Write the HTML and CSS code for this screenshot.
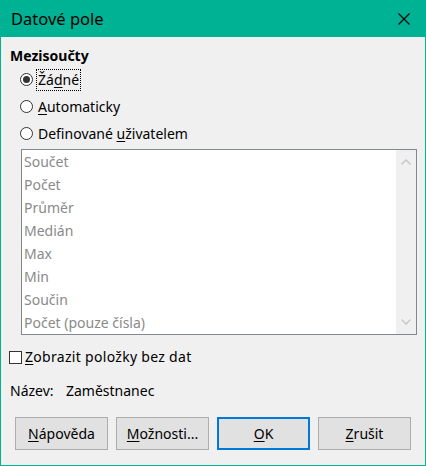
FILE: index.html
```html
<!DOCTYPE html>
<html lang="cs">
<head>
<meta charset="utf-8">
<title>Datové pole</title>
<link rel="stylesheet" href="styles.css">
</head>
<body>
<div class="window">
  <div class="titlebar">
    <span class="title">Datové pole</span>
    <svg class="close" width="12" height="12" viewBox="0 0 12 12" aria-hidden="true">
      <path d="M0.5 0.5 L11.5 11.5 M11.5 0.5 L0.5 11.5" stroke="#000" stroke-width="1.1" fill="none"/>
    </svg>
  </div>
  <div class="content">
    <div class="heading">Mezisoučty</div>
    <div class="radio-row">
      <span class="radio checked"></span>
      <span class="label focus">Žá<u>d</u>né</span>
    </div>
    <div class="radio-row">
      <span class="radio"></span>
      <span class="label"><u>A</u>utomaticky</span>
    </div>
    <div class="radio-row">
      <span class="radio"></span>
      <span class="label">Definované <u>u</u>živatelem</span>
    </div>
    <div class="listbox">
      <ul class="items">
        <li>Součet</li>
        <li>Počet</li>
        <li>Průměr</li>
        <li>Medián</li>
        <li>Max</li>
        <li>Min</li>
        <li>Součin</li>
        <li>Počet (pouze čísla)</li>
      </ul>
      <div class="scrollbar">
        <svg width="10" height="6" viewBox="0 0 10 6" aria-hidden="true"><path d="M0.5 5.5 L5 1 L9.5 5.5" stroke="#c4c4c4" stroke-width="1.3" fill="none"/></svg>
        <svg width="10" height="6" viewBox="0 0 10 6" aria-hidden="true"><path d="M0.5 0.5 L5 5 L9.5 0.5" stroke="#c4c4c4" stroke-width="1.3" fill="none"/></svg>
      </div>
    </div>
    <div class="check-row">
      <span class="checkbox"></span>
      <span class="label wide"><u>Z</u>obrazit položky bez dat</span>
    </div>
    <div class="name-row">
      <span class="name-label">Název:</span>
      <span class="name-value">Zaměstnanec</span>
    </div>
    <div class="buttons">
      <button class="btn"><u>N</u>ápověda</button>
      <button class="btn"><u>M</u>ožnosti...</button>
      <button class="btn default"><u>O</u>K</button>
      <button class="btn"><u>Z</u>rušit</button>
    </div>
  </div>
</div>
</body>
</html>
```

FILE: styles.css
```css
* { box-sizing: border-box; }
html, body { margin: 0; padding: 0; }
body {
  width: 426px;
  height: 466px;
  background: #f0f0f0;
  font-family: "Noto Sans", "Open Sans", sans-serif;
  font-size: 14px;
  color: #000;
}
.window {
  width: 426px;
  height: 466px;
  border: 1px solid #00b294;
  border-top: none;
  background: #f0f0f0;
  display: flex;
  flex-direction: column;
}
.titlebar {
  height: 37px;
  margin: 0 -1px;
  background: #00b294;
  display: flex;
  align-items: center;
  justify-content: space-between;
  padding: 0 16px 0 11px;
  font-size: 16.5px;
}
.title { color: #000; }
.close { display: block; }
.content {
  padding: 9px 8px 0 8px;
  display: flex;
  flex-direction: column;
}
.heading {
  font-weight: bold;
  line-height: 20px;
  height: 20px;
  margin-left: 1px;
}
.radio-row {
  height: 27px;
  display: flex;
  align-items: center;
  padding-left: 11px;
}
.radio-row:first-of-type { margin-top: 1px; }
.radio {
  width: 13px;
  height: 13px;
  border: 1px solid #333;
  border-radius: 50%;
  background: #fff;
  margin-right: 5px;
  flex: none;
  display: flex;
  align-items: center;
  justify-content: center;
}
.radio.checked::after {
  content: "";
  width: 7px;
  height: 7px;
  border-radius: 50%;
  background: #333;
}
.label { line-height: 20px; white-space: nowrap; }
.label.wide { letter-spacing: 0.3px; }
.focus {
  outline: 1px dotted #000;
  outline-offset: 0;
  padding: 0 1px;
  margin-left: -1px;
}
u { text-decoration: underline; text-underline-offset: 2px; }
.listbox {
  margin: 2px 0 0 12px;
  width: 396px;
  height: 186px;
  border: 1px solid #828790;
  background: #fff;
  display: flex;
}
.items {
  list-style: none;
  margin: 0;
  padding: 0 0 0 2px;
  flex: 1;
  color: #8a8a8a;
}
.items li {
  height: 23px;
  line-height: 23px;
  white-space: nowrap;
}
.scrollbar {
  width: 20px;
  background: #f0f0f0;
  display: flex;
  flex-direction: column;
  align-items: center;
  justify-content: space-between;
  padding: 9px 0 9px;
}
.scrollbar svg { display: block; }
.check-row {
  margin-top: 11px;
  height: 22px;
  display: flex;
  align-items: center;
}
.checkbox {
  width: 13px;
  height: 13px;
  border: 1px solid #333;
  background: #fff;
  margin-right: 3px;
  flex: none;
}
.name-row {
  margin-top: 11px;
  height: 22px;
  display: flex;
  align-items: center;
  padding-left: 1px;
}
.name-label { width: 56px; }
.buttons {
  margin-top: 16px;
  margin-left: 6px;
  display: flex;
  gap: 8px;
}
.btn {
  width: 93px;
  height: 33px;
  background: #e1e1e1;
  border: 1px solid #adadad;
  font: inherit;
  color: #000;
  padding: 0;
  margin: 0;
}
.btn.default {
  border: 2px solid #0078d7;
}
```
